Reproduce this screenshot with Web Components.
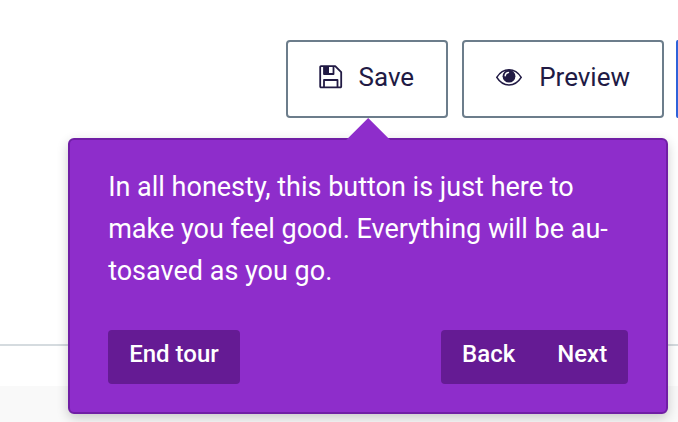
<!DOCTYPE html>
<html lang="en">
<head>
<meta charset="utf-8">
<meta name="viewport" content="width=device-width, initial-scale=1">
<title>Editor tour</title>
<style>
  html,
  body {
    height: 100%;
    margin: 0;
  }
  body {
    font-family: Roboto, "Open Sans", sans-serif;
    color: #211a44;
    background: #fff;
    overflow: hidden;
  }
</style>
</head>
<body>

<editor-page>
  <editor-toolbar slot="toolbar">
    <tour-anchor>
      <toolbar-button>
        <svg slot="icon" width="24" height="24" viewBox="0 0 24 24" fill="none" stroke="currentColor" stroke-width="1.800" stroke-linejoin="round" aria-hidden="true">
          <path d="M2 1.200h14.200l6 6V21.500a.8.8 0 0 1-.8.8H2a.8.8 0 0 1-.8-.8V2a.8.8 0 0 1 .8-.8z"/>
          <path d="M5 1.500v7.500h9.500V1.500"/>
          <path d="M5 1.500h5V9H5z" fill="currentColor" stroke="none"/>
          <path d="M5 22v-7h13.500v7"/>
        </svg>
        Save
      </toolbar-button>
      <tour-step slot="popover">
        In all honesty, this button is just here to make you feel good. Everything will be au&shy;tosaved as you go.
      </tour-step>
    </tour-anchor>
    <toolbar-button>
      <svg slot="icon" width="28" height="24" viewBox="0 0 28 24" aria-hidden="true">
        <path d="M1.800 12.400C5 7.200 9 4.800 14 4.800s9 2.400 12.200 7.600C23 17.500 19 20 14 20S5 17.500 1.800 12.400z" fill="none" stroke="currentColor" stroke-width="1.600" stroke-linejoin="round"/>
        <circle cx="14" cy="11.200" r="6.400" fill="currentColor"/>
        <path d="M10.200 10.800a3.800 3.800 0 0 1 3.200-3.400" fill="none" stroke="#fff" stroke-width="1.500" stroke-linecap="round"/>
      </svg>
      Preview
    </toolbar-button>
    <toolbar-button primary label="Publish"></toolbar-button>
  </editor-toolbar>
</editor-page>

<script>
const pageTemplate = document.createElement("template");
pageTemplate.innerHTML = `
  <style>
    :host {
      display: flex;
      flex-direction: column;
      height: 100%;
    }
    header {
      display: flex;
      flex-direction: column;
      min-height: 344px;
      border-bottom: 2px solid #d5dbdf;
    }
    main {
      flex: 1;
      margin-top: 40px;
      background: #f9f9f9;
    }
  </style>
  <header><slot name="toolbar"></slot></header>
  <main><slot></slot></main>
`;

class EditorPage extends HTMLElement {
  constructor() {
    super();
    this.attachShadow({ mode: "open" });
    this.shadowRoot.appendChild(pageTemplate.content.cloneNode(true));
  }
}

const toolbarTemplate = document.createElement("template");
toolbarTemplate.innerHTML = `
  <style>
    :host {
      display: flex;
      justify-content: flex-end;
      gap: 14px;
      padding-top: 40px;
    }
    /* only the edge of the last button shows */
    ::slotted([primary]) {
      width: 2px;
      margin-left: -2px;
      overflow: hidden;
    }
  </style>
  <slot></slot>
`;

class EditorToolbar extends HTMLElement {
  constructor() {
    super();
    this.attachShadow({ mode: "open" });
    this.shadowRoot.appendChild(toolbarTemplate.content.cloneNode(true));
  }
}

const buttonTemplate = document.createElement("template");
buttonTemplate.innerHTML = `
  <style>
    :host {
      display: block;
      flex: none;
    }
    button {
      display: flex;
      align-items: center;
      gap: 16px;
      box-sizing: border-box;
      height: 78px;
      margin: 0;
      padding: 0 32px 4px 31px;
      border: 2px solid #6c7d8b;
      border-radius: 4px;
      background: #fff;
      color: inherit;
      font: 400 26px/32px Roboto, "Open Sans", sans-serif;
      cursor: pointer;
    }
    :host([primary]) button {
      width: 100%;
      padding: 0;
      border-width: 0 0 0 2px;
      border-radius: 4px 0 0 4px;
      border-color: #2f62d9;
      background: #2f62d9;
    }
    :host([primary]) span {
      display: none;
    }
  </style>
  <button type="button">
    <slot name="icon"></slot>
    <span><slot></slot></span>
  </button>
`;

class ToolbarButton extends HTMLElement {
  constructor() {
    super();
    this.attachShadow({ mode: "open" });
    this.shadowRoot.appendChild(buttonTemplate.content.cloneNode(true));
  }

  connectedCallback() {
    if (this.hasAttribute("label"))
      this.shadowRoot.querySelector("button").setAttribute("aria-label", this.getAttribute("label"));
  }
}

const anchorTemplate = document.createElement("template");
anchorTemplate.innerHTML = `
  <style>
    :host {
      display: block;
      flex: none;
      position: relative;
    }
    ::slotted([slot="popover"]) {
      position: absolute;
      z-index: 1;
      top: calc(100% + 20px);
      right: -220px;
    }
  </style>
  <slot></slot>
  <slot name="popover"></slot>
`;

class TourAnchor extends HTMLElement {
  constructor() {
    super();
    this.attachShadow({ mode: "open" });
    this.shadowRoot.appendChild(anchorTemplate.content.cloneNode(true));
  }
}

const stepTemplate = document.createElement("template");
stepTemplate.innerHTML = `
  <style>
    :host {
      display: block;
      box-sizing: border-box;
      width: 600px;
      padding: 26px 38px 28px;
      border: 2px solid #701ea5;
      border-radius: 6px;
      background: #8e2dcb;
      box-shadow: 0 4px 12px rgb(0 0 0 / 0.2);
      color: #fff;
    }
    .arrow {
      position: absolute;
      left: 50%;
      bottom: 100%;
      width: 44px;
      height: 22px;
      margin-left: -22px;
      background: #8e2dcb;
      clip-path: polygon(50% 0, 100% 100%, 0 100%);
    }
    p {
      margin: 0;
      font-size: 27px;
      line-height: 42px;
    }
    footer {
      display: flex;
      justify-content: space-between;
      margin-top: 38px;
    }
    .group {
      display: flex;
      border-radius: 4px;
      background: #651b94;
    }
    button {
      margin: 0;
      padding: 8px 21px 14px;
      border: 0;
      background: none;
      color: inherit;
      font: 500 24px/32px Roboto, "Open Sans", sans-serif;
      cursor: pointer;
    }
  </style>
  <div class="arrow"></div>
  <p><slot></slot></p>
  <footer>
    <div class="group">
      <button type="button" id="end">End tour</button>
    </div>
    <div class="group">
      <button type="button">Back</button>
      <button type="button">Next</button>
    </div>
  </footer>
`;

class TourStep extends HTMLElement {
  constructor() {
    super();
    this.attachShadow({ mode: "open" });
    this.shadowRoot.appendChild(stepTemplate.content.cloneNode(true));
    this._onEnd = this._onEnd.bind(this);
  }

  connectedCallback() {
    this.shadowRoot.getElementById("end").addEventListener("click", this._onEnd);
  }

  disconnectedCallback() {
    this.shadowRoot.getElementById("end").removeEventListener("click", this._onEnd);
  }

  _onEnd() {
    this.remove();
  }
}

customElements.define("editor-page", EditorPage);
customElements.define("editor-toolbar", EditorToolbar);
customElements.define("toolbar-button", ToolbarButton);
customElements.define("tour-anchor", TourAnchor);
customElements.define("tour-step", TourStep);
</script>
</body>
</html>
